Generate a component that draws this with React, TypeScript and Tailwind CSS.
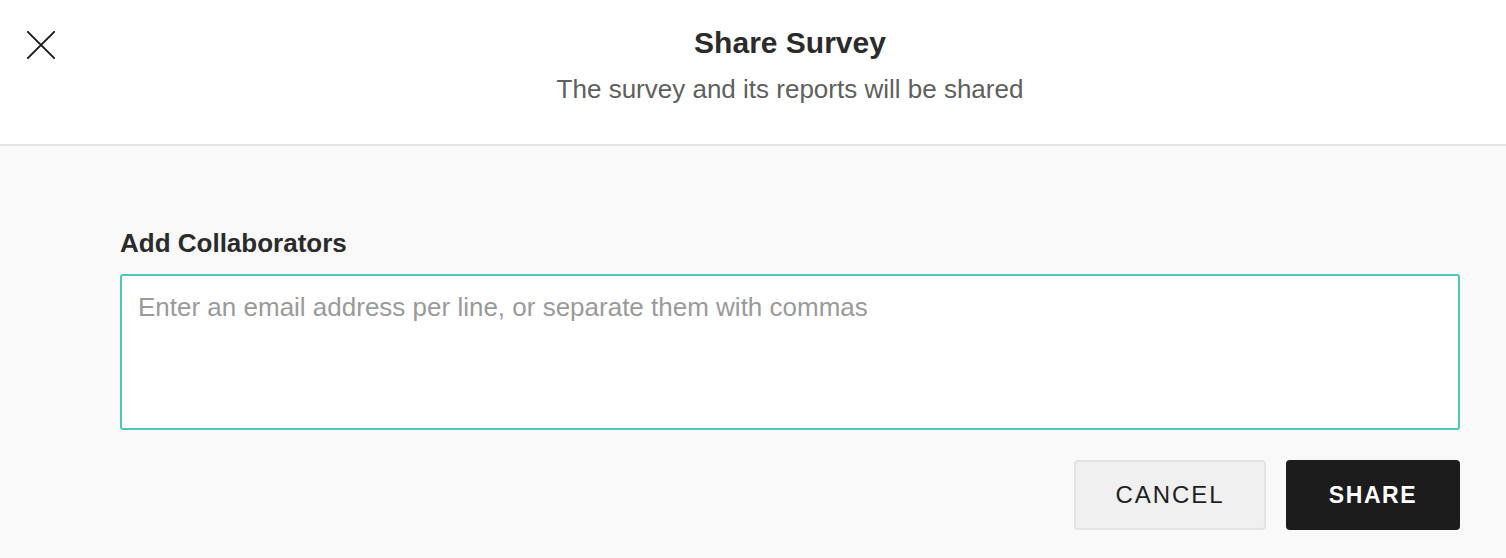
import React from "react";

export default function App() {
  return (
    <div
      className="w-full h-[558px] flex flex-col bg-[#f9f9f9] overflow-hidden"
      style={{ fontFamily: '"Liberation Sans", Arial, sans-serif' }}
    >
      <header className="h-[146px] shrink-0 bg-white border-b-2 border-[#e3e3e3] flex pr-[46px]">
        <div className="w-[120px] shrink-0 pl-[27px] pt-[31px]">
          <button className="w-[28px] h-[28px] flex items-center justify-center" aria-label="Close">
            <svg width="28" height="28" viewBox="0 0 28 28" fill="none">
              <path d="M0.8 0.8L27.2 27.2M27.2 0.8L0.8 27.2" stroke="#1a1a1a" strokeWidth="1.9" strokeLinecap="round" />
            </svg>
          </button>
        </div>
        <div className="flex-1 flex flex-col items-center pt-[25px]">
          <h1 className="text-[30px] leading-[36px] font-bold text-[#2b2b2b]">Share Survey</h1>
          <p className="mt-[13px] text-[26px] leading-[30px] text-[#5f5f5f]">
            The survey and its reports will be shared
          </p>
        </div>
      </header>
      <main className="flex-1 pl-[120px] pr-[46px] pt-[82px] flex flex-col">
        <label className="text-[26px] leading-[30px] font-bold text-[#2b2b2b]">Add Collaborators</label>
        <textarea
          className="mt-[16px] h-[156px] w-full bg-white border-2 border-[#4ec7c0] rounded-[3px] px-[16px] pt-[16px] text-[26px] leading-[30px] text-[#333] placeholder:text-[#9a9a9a] resize-none outline-none"
          placeholder="Enter an email address per line, or separate them with commas"
        />
        <div className="mt-[30px] flex justify-end gap-[20px]">
          <button className="w-[192px] h-[70px] bg-[#f0f0f0] border-2 border-[#e3e3e3] rounded-[4px] text-[24px] tracking-[0.08em] text-[#1f1f1f]">
            CANCEL
          </button>
          <button className="w-[174px] h-[70px] bg-[#1c1c1c] rounded-[4px] text-[23px] font-bold tracking-[0.07em] text-white">
            SHARE
          </button>
        </div>
      </main>
    </div>
  );
}
